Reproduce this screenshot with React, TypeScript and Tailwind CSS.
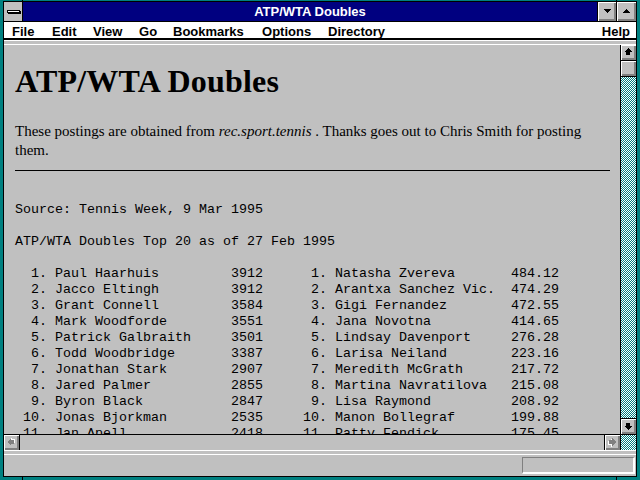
import React from "react";

const ROWS: [string, string, string, string][] = [
  ["Paul Haarhuis", "3912", "Natasha Zvereva", "484.12"],
  ["Jacco Eltingh", "3912", "Arantxa Sanchez Vic.", "474.29"],
  ["Grant Connell", "3584", "Gigi Fernandez", "472.55"],
  ["Mark Woodforde", "3551", "Jana Novotna", "414.65"],
  ["Patrick Galbraith", "3501", "Lindsay Davenport", "276.28"],
  ["Todd Woodbridge", "3387", "Larisa Neiland", "223.16"],
  ["Jonathan Stark", "2907", "Meredith McGrath", "217.72"],
  ["Jared Palmer", "2855", "Martina Navratilova", "215.08"],
  ["Byron Black", "2847", "Lisa Raymond", "208.92"],
  ["Jonas Bjorkman", "2535", "Manon Bollegraf", "199.88"],
  ["Jan Apell", "2418", "Patty Fendick", "175.45"],
];

const rankLines = ROWS.map((r, i) => {
  const n = `${i + 1}.`;
  return n.padStart(4) + " " + r[0].padEnd(22) + r[1].padEnd(9) + n.padStart(3) + " " + r[2].padEnd(22) + r[3];
});

const preText = ["Source: Tennis Week, 9 Mar 1995", "", "ATP/WTA Doubles Top 20 as of 27 Feb 1995", "", ...rankLines].join("\n");

const MENU = [
  { k: "F", rest: "ile", w: "w-[40px]" },
  { k: "E", rest: "dit", w: "w-[41px]" },
  { k: "V", rest: "iew", w: "w-[46px]" },
  { k: "G", rest: "o", w: "w-[34px]" },
  { k: "B", rest: "ookmarks", w: "w-[89px]" },
  { k: "O", rest: "ptions", w: "w-[66px]" },
  { k: "D", rest: "irectory", w: "w-[90px]" },
];

const bevel = "bg-[#c0c0c0] shadow-[inset_1px_1px_#ffffff,inset_-1px_-1px_#808080,inset_-2px_-2px_#808080]";
const checker = "bg-[repeating-conic-gradient(#008080_0%_25%,#ffffff_0%_50%)] bg-[length:2px_2px]";

function Arrow({ dir, disabled }: { dir: "up" | "down" | "left" | "right"; disabled?: boolean }) {
  const rot = { up: 0, right: 90, down: 180, left: 270 }[dir];
  const pts = "7,3 11,7 9,7 9,10 5,10 5,7 3,7";
  return (
    <svg width="15" height="15" viewBox="0 0 15 15" shapeRendering="crispEdges">
      <g transform={`rotate(${rot} 7 7)`}>
        {disabled && <polygon points={pts} fill="#ffffff" transform="translate(1 1)" />}
        <polygon points={pts} fill={disabled ? "#808080" : "#000000"} />
      </g>
    </svg>
  );
}

export default function App() {
  return (
    <div className="relative w-[640px] h-[480px] bg-[#008080] overflow-hidden font-['Liberation_Sans',sans-serif]">
      <div className="absolute left-[22px] top-0 w-px h-[1px] bg-black" />
      <div className="absolute left-[616px] top-0 w-px h-[1px] bg-black" />
      <div className="absolute left-[22px] bottom-0 w-px h-[3px] bg-black" />
      <div className="absolute left-[616px] bottom-0 w-px h-[3px] bg-black" />
      <div className="ml-[3px] mt-[1px] w-[634px] h-[476px] border border-black flex flex-col bg-[#c0c0c0]">
        {/* title bar */}
        <div className="flex h-[20px] border-b border-black shrink-0">
          <div className="w-[19px] border-r border-black bg-[#c0c0c0] flex items-center justify-center">
            <div className="w-[13px] h-[3px] bg-white border border-black shadow-[1px_1px_#000]" />
          </div>
          <div className="flex-1 bg-[#000080] text-white font-bold text-[13px] leading-[19px] text-center">ATP/WTA Doubles</div>
          <div className={`w-[19px] border-l border-black flex items-center justify-center ${bevel}`}>
            <svg width="9" height="5" viewBox="0 0 9 5" shapeRendering="crispEdges"><polygon points="1,0 8,0 4.5,4" fill="#000" /></svg>
          </div>
          <div className={`w-[20px] border-l border-black flex items-center justify-center ${bevel}`}>
            <svg width="9" height="5" viewBox="0 0 9 5" shapeRendering="crispEdges"><polygon points="4.5,0 8,4 1,4" fill="#000" /></svg>
          </div>
        </div>
        {/* menu bar */}
        <div className="flex h-[18px] bg-white border-b-2 border-black pl-[8px] pr-[6px] text-[13px] font-bold leading-[19px] text-black shrink-0">
          {MENU.map((m) => (
            <div key={m.k} className={m.w}>
              <span className="underline underline-offset-2">{m.k}</span>
              {m.rest}
            </div>
          ))}
          <div className="ml-auto">
            <span className="underline underline-offset-2">H</span>elp
          </div>
        </div>
        <div className="h-[5px] shrink-0 bg-[#c0c0c0] border-t border-white border-b border-black" />
        {/* main area */}
        <div className="grid grid-cols-[616px_16px] grid-rows-[389px_16px] shrink-0">
          <div className="overflow-hidden bg-[#c0c0c0] pl-[11px] pr-[10px] text-black">
            <h1 className="mt-[20px] font-['Liberation_Serif',serif] font-bold text-[32px] leading-[32px] tracking-[0.2px]">ATP/WTA Doubles</h1>
            <p className="mt-[25px] font-['Liberation_Serif',serif] text-[15px] leading-[19px]">
              These postings are obtained from <i>rec.sport.tennis</i> . Thanks goes out to Chris Smith for posting them.
            </p>
            <div className="mt-[10px] border-t border-black" />
            <pre className="mt-[31px] font-['Liberation_Mono',monospace] text-[13.333px] leading-[16px] whitespace-pre">{preText}</pre>
          </div>
          <div className="border-l border-black flex flex-col">
            <div className={`h-[16px] border-b border-black flex items-center justify-center ${bevel}`}>
              <Arrow dir="up" />
            </div>
            <div className={`h-[16px] border-b border-black ${bevel}`} />
            <div className={`flex-1 ${checker}`} />
            <div className={`h-[16px] border-t border-black flex items-center justify-center ${bevel}`}>
              <Arrow dir="down" />
            </div>
          </div>
          <div className="border-t border-black flex bg-[#c0c0c0]">
            <div className={`w-[16px] border-r border-black flex items-center justify-center ${bevel}`}>
              <Arrow dir="left" disabled />
            </div>
            <div className="flex-1" />
            <div className={`w-[16px] border-l border-black flex items-center justify-center ${bevel}`}>
              <Arrow dir="right" disabled />
            </div>
          </div>
          <div className={`border-t border-l border-black ${checker}`} />
        </div>
        <div className="h-[5px] shrink-0 bg-[#c0c0c0] border-t border-white border-b border-black" />
        {/* status bar */}
        <div className="flex-1 flex items-center justify-end pr-[1px]">
          <div className="w-[113px] h-[17px] border-t border-l border-[#808080] border-r-2 border-b-2 border-r-white border-b-white" />
        </div>
      </div>
    </div>
  );
}
